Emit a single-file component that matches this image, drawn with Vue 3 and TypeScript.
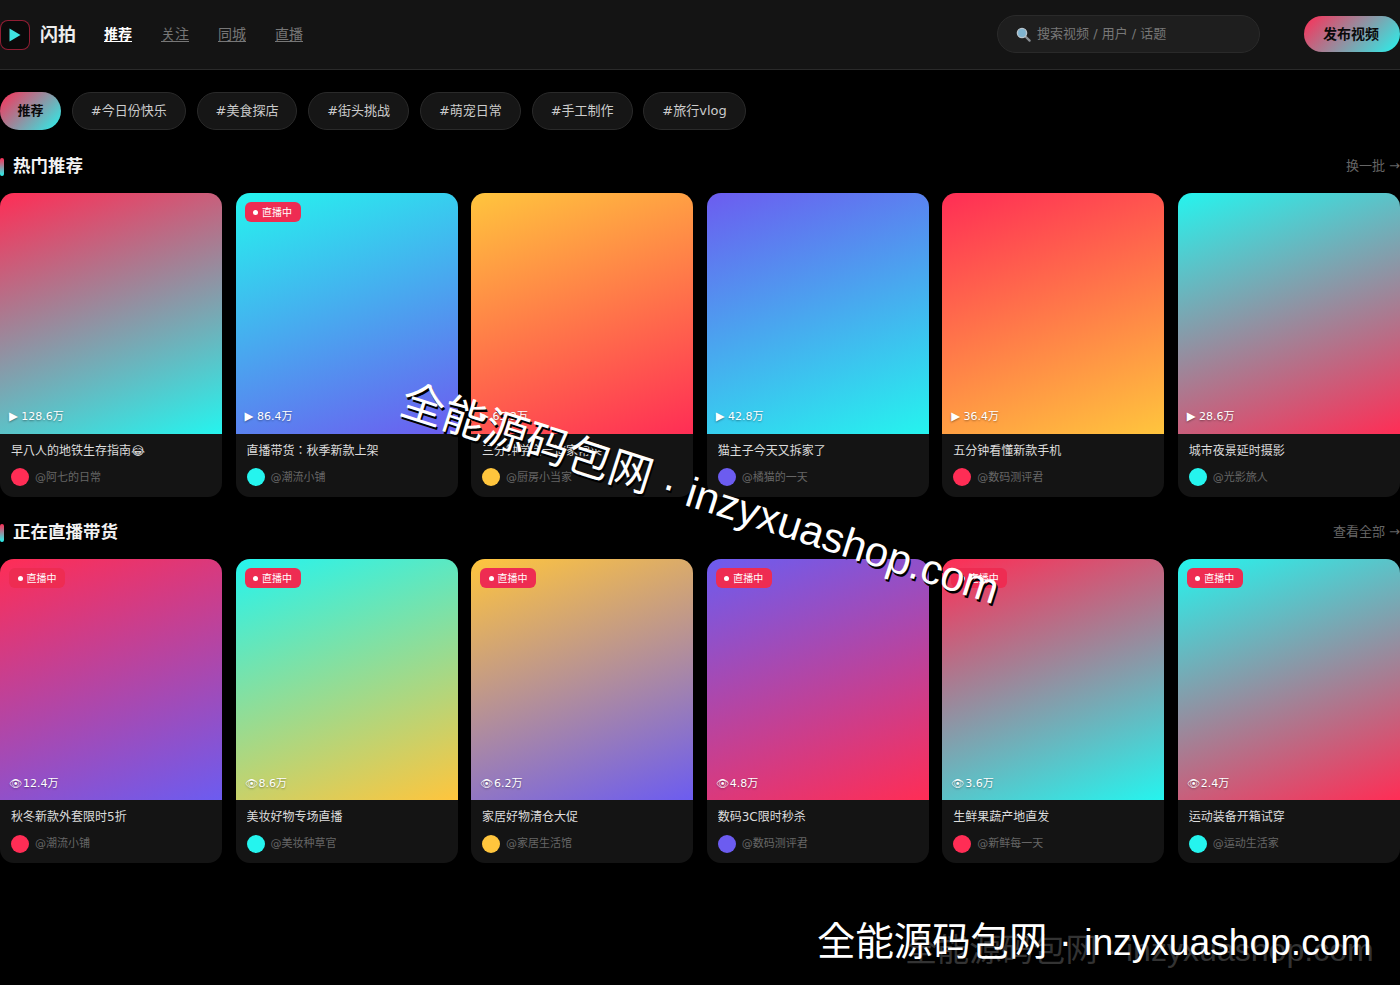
<script setup lang="ts">
interface Card { grad: string; stat: string; title: string; user: string; live?: boolean; av: string }
const R = '#ff2d55', C = '#25f4ee', Y = '#ffc53d', P = '#6c5cf0'
const g = (a: string, b: string) => `linear-gradient(160deg, ${a}, ${b})`
const avs = [R, C, Y, P, R, C]
const nav = ['关注', '同城', '直播']
const chips = ['#今日份快乐', '#美食探店', '#街头挑战', '#萌宠日常', '#手工制作', '#旅行vlog']
const hot: Card[] = [
  { grad: g(R, C), stat: '128.6万', title: '早八人的地铁生存指南😂', user: '@阿七的日常', av: avs[0] },
  { grad: g(C, P), stat: '86.4万', title: '直播带货：秋季新款上架', user: '@潮流小铺', av: avs[1], live: true },
  { grad: g(Y, R), stat: '65.2万', title: '三分钟学会一道家常菜', user: '@厨房小当家', av: avs[2] },
  { grad: g(P, C), stat: '42.8万', title: '猫主子今天又拆家了', user: '@橘猫的一天', av: avs[3] },
  { grad: g(R, Y), stat: '36.4万', title: '五分钟看懂新款手机', user: '@数码测评君', av: avs[4] },
  { grad: g(C, R), stat: '28.6万', title: '城市夜景延时摄影', user: '@光影旅人', av: avs[5] },
]
const live: Card[] = [
  { grad: g(R, P), stat: '12.4万', title: '秋冬新款外套限时5折', user: '@潮流小铺', av: avs[0], live: true },
  { grad: g(C, Y), stat: '8.6万', title: '美妆好物专场直播', user: '@美妆种草官', av: avs[1], live: true },
  { grad: g(Y, P), stat: '6.2万', title: '家居好物清仓大促', user: '@家居生活馆', av: avs[2], live: true },
  { grad: g(P, R), stat: '4.8万', title: '数码3C限时秒杀', user: '@数码测评君', av: avs[3], live: true },
  { grad: g(R, C), stat: '3.6万', title: '生鲜果蔬产地直发', user: '@新鲜每一天', av: avs[4], live: true },
  { grad: g(C, R), stat: '2.4万', title: '运动装备开箱试穿', user: '@运动生活家', av: avs[5], live: true },
]
const sections = [
  { title: '热门推荐', more: '换一批 →', icon: '▶', cls: 'ic-play', cards: hot },
  { title: '正在直播带货', more: '查看全部 →', icon: '👁', cls: 'ic-eye', cards: live },
]
</script>

<template>
  <div class="page">
    <header class="top">
      <div class="logo"><svg width="12" height="14" viewBox="0 0 12 14"><path d="M0.5 0.5 L11.5 7 L0.5 13.5 Z" fill="#3fe3e0" /></svg></div>
      <span class="brand">闪拍</span>
      <nav class="nav">
        <a class="nav-on">推荐</a>
        <a v-for="n in nav" :key="n">{{ n }}</a>
      </nav>
      <div class="search">
        <svg width="15" height="15" viewBox="0 0 15 15">
          <path d="M9 9 L13.6 13.6" stroke="#8a8f94" stroke-width="2.2" stroke-linecap="round" />
          <circle cx="6" cy="6" r="4.6" fill="#7fb4d0" stroke="#b8c4cc" stroke-width="1.4" />
        </svg>
        <span>搜索视频 / 用户 / 话题</span>
      </div>
      <button class="publish">发布视频</button>
    </header>
    <div class="chips">
      <span class="chip chip-on">推荐</span>
      <span v-for="c in chips" :key="c" class="chip">{{ c }}</span>
    </div>
    <section v-for="s in sections" :key="s.title" class="sec">
      <div class="sec-head">
        <i class="bar"></i>
        <h2>{{ s.title }}</h2>
        <span class="more">{{ s.more }}</span>
      </div>
      <div class="grid">
        <article v-for="c in s.cards" :key="c.title" class="card">
          <div class="thumb" :style="{ background: c.grad }">
            <span v-if="c.live" class="badge"><i class="dot"></i>直播中</span>
            <span class="stat" :class="s.cls + '-row'"><span :class="s.cls">{{ s.icon }}</span> {{ c.stat }}</span>
          </div>
          <div class="info">
            <div class="title">{{ c.title }}</div>
            <div class="user"><i class="av" :style="{ background: c.av }"></i><span class="uname">{{ c.user }}</span></div>
          </div>
        </article>
      </div>
    </section>
    <div class="wm-diag"><span class="d-cjk">全能源码包网</span><span class="d-sep"> · </span><span class="d-lat">inzyxuashop.com</span></div>
    <div class="wm-dim">全能源码包网 · inzyxuashop.com</div>
    <div class="wm-bottom"><span class="wm-cjk">全能源码包网</span><span class="wm-sep"> · </span><span class="wm-lat">inzyxuashop.com</span></div>
  </div>
</template>

<style>
html, body { background: #000; margin: 0; overflow: hidden; }
</style>

<style scoped>
.page {
  position: relative;
  width: 1400px;
  height: 985px;
  overflow: hidden;
  background: #000;
  color: #fff;
  line-height: 1.5;
  font-family: "DejaVu Sans", "Noto Sans CJK JP", sans-serif;
}
.top {
  height: 68px;
  padding-bottom: 1px;
  display: flex;
  align-items: center;
  background: #141414;
  border-bottom: 1px solid #2a2a2a;
}
.logo {
  width: 30px;
  height: 30px;
  margin-top: 2px;
  box-sizing: border-box;
  border: 1px solid rgba(255, 45, 85, 0.55);
  border-radius: 8px;
  background: #0a0a0a;
  display: flex;
  align-items: center;
  justify-content: center;
}
.brand { margin-left: 10px; font-size: 18px; font-weight: 700; color: #eee; }
.nav { display: flex; gap: 29px; margin-left: 28px; font-size: 14px; color: #777; }
.nav a { text-decoration: underline; text-underline-offset: 2px; }
.nav .nav-on { color: #fff; font-weight: 700; }
.search {
  margin-left: auto;
  width: 263px;
  height: 38px;
  box-sizing: border-box;
  padding-left: 18px;
  display: flex;
  align-items: center;
  gap: 6px;
  border: 1px solid #2a2a2a;
  border-radius: 19px;
  background: #1e1e1e;
  color: #777;
  font-size: 13px;
}
.publish {
  margin-left: 44px;
  width: 96px;
  height: 36px;
  border: 0;
  border-radius: 18px;
  padding: 0 2px 0 0;
  background: linear-gradient(135deg, #ff2d55, #25f4ee);
  color: #0a0a0a;
  font: 700 14px/1.5 "DejaVu Sans", "Noto Sans CJK JP", sans-serif;
}
.chips { display: flex; gap: 10.8px; margin-top: 22px; }
.chip {
  height: 38px;
  box-sizing: border-box;
  padding: 0 18px;
  display: flex;
  align-items: center;
  border: 1px solid #2a2a2a;
  border-radius: 19px;
  background: #161616;
  color: #ccc;
  font-size: 13px;
}
.chip-on {
  padding: 0 17.5px;
  border: 0;
  background: linear-gradient(135deg, #ff2d55, #25f4ee);
  color: #0a0a0a;
  font-weight: 700;
}
.sec-head { display: flex; align-items: center; height: 27px; margin: 23px 0 13px; }
.sec + .sec .sec-head { margin: 22px 0 13.4px; }
.bar {
  width: 4px;
  height: 18px;
  margin-right: 9px;
  border-radius: 2px;
  background: linear-gradient(180deg, #ff2d55, #25f4ee);
}
h2 { margin: 0; font-size: 17.5px; font-weight: 700; color: #f2f2f2; }
.more { margin-left: auto; margin-bottom: 2px; font-size: 13px; color: #666; }
.grid { display: grid; grid-template-columns: repeat(6, 1fr); gap: 13.3px; }
.card { height: 304px; border-radius: 14px; overflow: hidden; background: #141414; }
.thumb { position: relative; height: 241px; }
.badge {
  position: absolute;
  left: 9px;
  top: 9px;
  height: 20px;
  padding: 0 8.5px;
  display: flex;
  align-items: center;
  gap: 4px;
  border-radius: 6px;
  background: #ee2c52;
  font-size: 10px;
  color: #fff;
}
.dot { width: 5px; height: 5px; border-radius: 50%; background: #fff; }
.stat {
  position: absolute;
  left: 9px;
  bottom: 9px;
  font-size: 11px;
  line-height: 16px;
  color: #fff;
  text-shadow: 0 1px 2px rgba(0, 0, 0, 0.4);
}
.ic-eye-row { bottom: 8.4px; }
.ic-play { font-size: 11.5px; }
.ic-eye { font-size: 10.5px; margin-right: -2.5px; }
.info { padding: 8px 11px 0; }
.title {
  font-size: 12px;
  line-height: 18px;
  color: #dcdcdc;
  white-space: nowrap;
  overflow: hidden;
}
.user {
  display: flex;
  align-items: center;
  gap: 6px;
  margin-top: 8px;
  font-size: 11px;
  color: #666;
}
.uname { margin-top: 2px; }
.av { width: 18px; height: 18px; border-radius: 50%; }
.wm-diag, .wm-dim, .wm-bottom {
  position: absolute;
  white-space: nowrap;
  font-family: "Liberation Sans", "Noto Sans CJK JP", sans-serif;
}
.wm-diag {
  left: 410px;
  top: 375px;
  line-height: 50px;
  color: #fff;
  text-shadow: 2px 2px 0 #000;
  transform: rotate(17.8deg);
  transform-origin: 0 0;
}
.d-cjk { font-size: 43.6px; }
.d-sep { font-size: 43px; }
.d-lat { font-size: 42.2px; }
.wm-dim { left: 905px; top: 932px; font-size: 32.1px; line-height: 36px; color: #333; }
.wm-bottom { left: 817px; top: 919px; line-height: 46px; color: #fff; }
.wm-cjk { font-size: 38.4px; }
.wm-sep { font-size: 38px; margin-left: 1px; margin-right: 2px; }
.wm-lat { font-size: 37.2px; }
</style>
